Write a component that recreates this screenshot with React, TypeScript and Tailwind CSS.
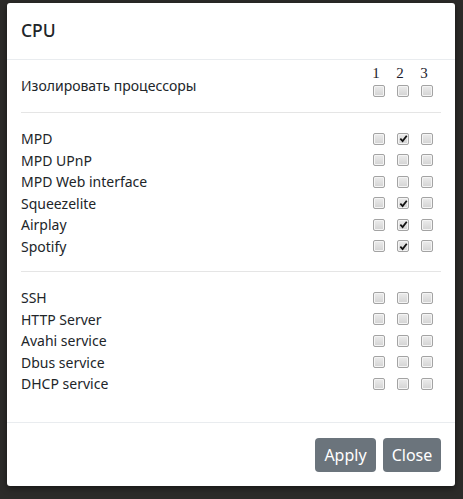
import React from "react";

type Row = { label: string; checked: [boolean, boolean, boolean] };

const audio: Row[] = [
  { label: "MPD", checked: [false, true, false] },
  { label: "MPD UPnP", checked: [false, false, false] },
  { label: "MPD Web interface", checked: [false, false, false] },
  { label: "Squeezelite", checked: [false, true, false] },
  { label: "Airplay", checked: [false, true, false] },
  { label: "Spotify", checked: [false, true, false] },
];

const system: Row[] = [
  { label: "SSH", checked: [false, false, false] },
  { label: "HTTP Server", checked: [false, false, false] },
  { label: "Avahi service", checked: [false, false, false] },
  { label: "Dbus service", checked: [false, false, false] },
  { label: "DHCP service", checked: [false, false, false] },
];

function Box({ checked }: { checked: boolean }) {
  return (
    <span className="flex h-[12px] w-[12px] items-center justify-center rounded-[2px] border border-[#a3a3a3] bg-gradient-to-b from-[#ececec] to-[#d3d3d3] shadow-[inset_0_0_0_1px_#f4f4f4]">
      {checked && (
        <svg viewBox="0 0 10 10" className="h-[9px] w-[9px]">
          <path d="M1.5 5.2 L4 7.8 L8.6 2" fill="none" stroke="#111" strokeWidth="2" />
        </svg>
      )}
    </span>
  );
}

function Boxes({ checked }: { checked: [boolean, boolean, boolean] }) {
  return (
    <div className="grid grid-cols-[24px_24px_24px] pr-[2px]">
      {checked.map((c, i) => (
        <div key={i} className="flex justify-center">
          <Box checked={c} />
        </div>
      ))}
    </div>
  );
}

function ServiceRow({ row }: { row: Row }) {
  return (
    <div className="flex h-[21.5px] items-center justify-between">
      <span>{row.label}</span>
      <Boxes checked={row.checked} />
    </div>
  );
}

export default function App() {
  return (
    <div className="h-[499px] w-[463px] overflow-hidden bg-[#2c2b29] pt-[3px] pl-[7px]">
      <div
        className="flex h-[483px] w-[448px] flex-col rounded-[3px] bg-white text-[14px] text-[#212529] shadow-[0_2px_6px_rgba(0,0,0,0.5)]"
        style={{ fontFamily: '"Noto Sans", "Open Sans", sans-serif' }}
      >
        <div className="flex h-[57px] items-center border-b border-[#e9ecef] px-[14px]">
          <h5 className="text-[17.5px] font-medium leading-none">CPU</h5>
        </div>

        <div className="flex-1 px-[14px] pt-[5px]">
          <div className="flex justify-between">
            <span className="pt-[10px]">Изолировать процессоры</span>
            <div>
              <div
                className="grid h-[17px] -translate-x-[3px] grid-cols-[24px_24px_24px] pr-[2px] text-center text-[15px] leading-[17px] text-[#1d1d2b]"
                style={{ fontFamily: '"Liberation Serif", serif' }}
              >
                <span>1</span>
                <span>2</span>
                <span>3</span>
              </div>
              <div className="mt-[3px]">
                <Boxes checked={[false, false, false]} />
              </div>
            </div>
          </div>

          <div className="mt-[15px] mb-[15px] h-px bg-[#e5e5e5]" />

          {audio.map((r) => (
            <ServiceRow key={r.label} row={r} />
          ))}

          <div className="mt-[14px] mb-[15px] h-px bg-[#e5e5e5]" />

          {system.map((r) => (
            <ServiceRow key={r.label} row={r} />
          ))}
        </div>

        <div className="flex h-[64px] items-start justify-end gap-[7px] border-t border-[#e9ecef] px-[14px] pt-[15px]">
          <button className="h-[34px] w-[61px] rounded-[4px] bg-[#6b747c] text-[16px] text-white">
            Apply
          </button>
          <button className="h-[34px] w-[58px] rounded-[4px] bg-[#6b747c] text-[16px] text-white">
            Close
          </button>
        </div>
      </div>
    </div>
  );
}
